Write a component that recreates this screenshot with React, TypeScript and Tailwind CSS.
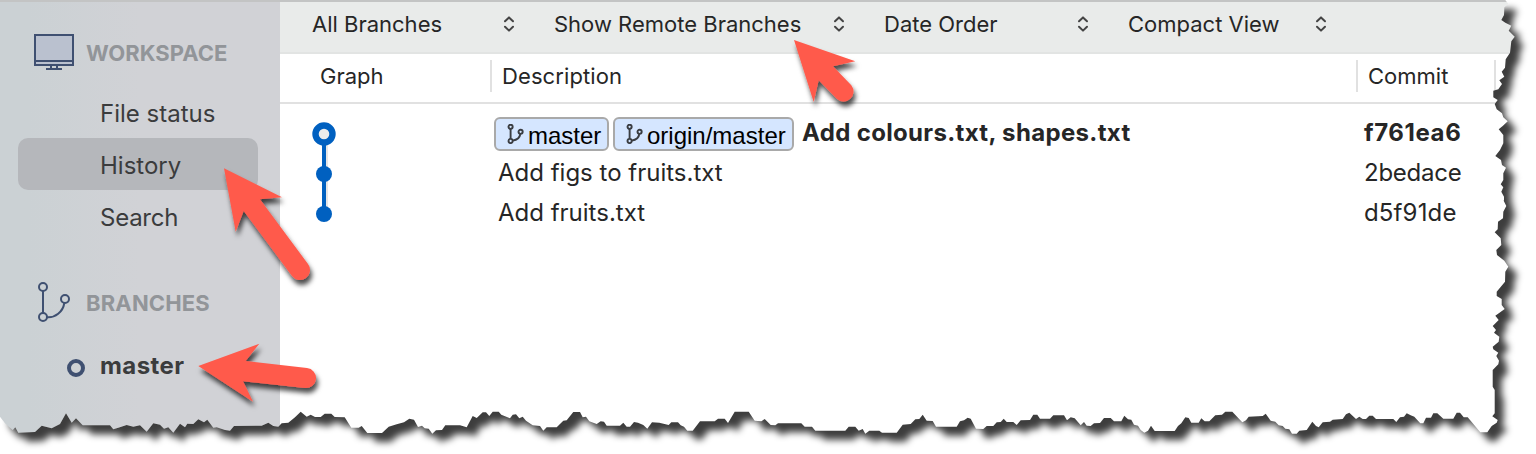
import React from "react";

type Pt = [number, number];

/* Outline of the torn sheet: runs of points in third-of-a-pixel units, each with its own origin. */
const RUNS: { ox: number; oy: number; pts: string }[] = [
  {
    ox: 1466,
    oy: 0,
    pts: "118,0 127,12 115,22 114,45 106,60 118,68 136,77 128,92 146,110 136,124 132,158 119,178 117,203 107,215 115,230 100,241 108,252 97,268 82,272 82,292 95,300 86,312 92,328 108,340 112,352 125,364 110,378 98,388 112,405 112,430 102,450 88,468 105,480 108,495 120,503 112,520 112,540 104,553 112,562 106,575 114,590 114,602",
  },
  {
    ox: 1416,
    oy: 200,
    pts: "262,0 271,18 262,35 261,55 246,65 245,88 236,97 254,115 256,135 241,150 243,165 265,182 277,200 268,215 267,245 242,275 242,288 257,297 257,315 266,327 238,347 248,360 230,378 240,390 234,398 250,410 248,425 230,440 232,448 247,458 241,468 249,482 247,493 230,510 230,560 236,570 236,640 229,649 245,660 242,668 227,678 214,697 193,697 155,652 143,652 132,638 122,638 112,656 82,656 64,640 52,640 45,653 30,653 22,670 13,670",
  },
  {
    ox: 1100,
    oy: 380,
    pts: "943,110 932,106 920,100 912,110 900,112 889,126 880,117 828,117 818,107 808,107 798,117 788,117 778,110 768,117 748,98 738,103 728,117 698,119 690,125 668,127 656,142 648,138 637,125 620,150 598,152 590,161 576,161 568,148 556,146 548,138 536,136 526,125 512,122 497,101 488,108 446,110 438,121 427,127 397,95 376,95 366,104 346,106 328,124 314,124 304,115 296,128 274,128 266,114 256,112 244,130 234,138 224,153 164,153 153,137 144,152 133,158 122,150 114,137 102,134 94,119 84,118 73,107 64,124 42,124 32,114 12,114 0,129",
  },
  {
    ox: 700,
    oy: 380,
    pts: "1182,130 1172,138 1160,137 1152,126 1142,136 1124,115 1112,112 1101,121 1092,106 1060,106 1050,116 1020,116 1012,104 1000,104 990,120 962,121 950,135 940,126 920,126 911,116 902,126 890,127 880,138 860,138 850,147 828,146 812,116 803,113 792,121 780,124 770,140 708,140 698,123 680,122 668,104 658,117 646,118 632,132 608,134 590,158 546,158 538,152 508,152 496,161 488,147 476,152 466,140 446,140 436,152 346,152 336,140 314,140 304,130 234,130 226,136 212,135 194,117 184,124 164,122 146,95 104,95 84,129 74,116 54,116 44,124 0,124",
  },
  {
    ox: 280,
    oy: 380,
    pts: "1238,152 1222,152 1212,140 1202,136 1194,127 1174,127 1166,135 1138,128 1116,127 1102,146 1090,135 1074,128 1062,126 1050,140 1040,140 1030,128 1020,137 980,137 972,125 962,124 950,132 928,124 918,110 908,112 900,96 880,96 860,121 850,122 830,142 800,142 790,152 780,138 758,136 738,122 728,110 718,115 708,103 698,104 690,115 664,104 656,95 638,95 628,108 618,97 608,97 590,114 578,108 560,142 540,136 496,136 486,150 468,151 457,161 446,146 434,145 426,137 414,141 402,119 388,116 372,127 350,133 326,140 306,159 262,159 245,138 236,143 214,143 194,112 164,111 154,101 134,101 122,111",
  },
  {
    ox: 0,
    oy: 230,
    pts: "945,561 932,554 920,560 902,545 885,562 865,578 845,580 835,590 820,588 805,578 785,587 702,588 690,602 675,600 650,592 640,593 622,569 612,577 595,568 580,582 562,581 555,592 540,581 520,608 505,592 492,596 480,584 460,580 440,605 420,586 400,590 380,585 355,593 340,598 330,586 248,586 228,565 215,578 198,550 180,582 155,595 125,587 105,606 55,608 46,592 38,600 15,580 0,560",
  },
];

const SHEET =
  "M0 0L" +
  RUNS.flatMap((r) =>
    r.pts.split(" ").map((p) => {
      const [x, y] = p.split(",").map(Number) as Pt;
      return `${(r.ox + x / 3).toFixed(1)} ${(r.oy + y / 3).toFixed(1)}`;
    }),
  ).join("L") +
  "Z";

function TornEdge() {
  return (
    <svg className="pointer-events-none absolute inset-0" width="1536" height="454" viewBox="0 0 1536 454">
      <defs>
        <clipPath id="outside">
          <path clipRule="evenodd" d={`M-20-20H1560V480H-20Z${SHEET}`} />
        </clipPath>
        <filter id="soft" x="-5%" y="-5%" width="110%" height="115%">
          <feGaussianBlur stdDeviation="3.8" />
        </filter>
      </defs>
      <g clipPath="url(#outside)">
        <rect width="1536" height="454" fill="#fff" />
        <g filter="url(#soft)">
          <path d={SHEET} transform="translate(9 9)" fill="#000" fillOpacity="0.76" />
        </g>
      </g>
    </svg>
  );
}

function Arrows() {
  return (
    <svg className="pointer-events-none absolute inset-0" width="1536" height="454" viewBox="0 0 1536 454">
      <defs>
        <filter id="arrowShadow" x="-30%" y="-30%" width="160%" height="160%">
          <feDropShadow dx="2" dy="5" stdDeviation="2.6" floodColor="#000" floodOpacity="0.7" />
        </filter>
      </defs>
      <g fill="#ff5a4c">
        <path filter="url(#arrowShadow)" d="M224 168.3L282 197.3L260 199.3L308 264A10 10 0 0 1 292 276L243.7 211L235.7 231.7Z" />
        <path filter="url(#arrowShadow)" d="M198.3 366L259.3 343.7L245.7 361L307 368A10 10 0 0 1 305 388L243 381.3L253 401.7Z" />
        <path filter="url(#arrowShadow)" d="M794 40L855.3 61.3L833 66.3L851.3 85.2A10 10 0 0 1 836.7 98.8L818.7 80.3L813.7 102Z" />
      </g>
    </svg>
  );
}

function Monitor() {
  return (
    <svg width="40" height="36" viewBox="0 0 40 36" fill="none" stroke="#3f5071" strokeWidth="2">
      <rect x="1" y="1" width="38" height="30" fill="#bac1cf" />
      <path d="M1 27H39M17 31V35M23 31V35M12 35H28" />
    </svg>
  );
}

function BranchLarge() {
  return (
    <svg width="32" height="40" viewBox="0 0 32 40" fill="none" stroke="#3f5071" strokeWidth="2">
      <circle cx="5" cy="5" r="4" />
      <circle cx="5" cy="35" r="4" />
      <circle cx="27" cy="17" r="4" />
      <path d="M5 9V31M9 35.3C17 36 25 30 26.3 21" />
    </svg>
  );
}

function BranchSmall() {
  return (
    <svg className="mt-px shrink-0" width="17" height="20" viewBox="0 0 17 20" fill="none" stroke="#3a3d42" strokeWidth="1.9">
      <circle cx="3.6" cy="2.8" r="2.1" />
      <circle cx="3.6" cy="17" r="2.1" />
      <circle cx="13.6" cy="7.8" r="2.1" />
      <path d="M3.6 5V14.8M5.8 16.6C9.8 16 12.8 13.5 13.3 10" />
    </svg>
  );
}

function Select({ label, box }: { label: string; box: string }) {
  return (
    <div className={`flex shrink-0 items-center justify-between ${box}`}>
      <span className="whitespace-nowrap pb-px">{label}</span>
      <svg width="12" height="16" viewBox="0 0 12 16" fill="none" stroke="#444" strokeWidth="2" strokeLinecap="round" strokeLinejoin="round">
        <path d="M2 5.2L6 1.4L10 5.2M2 10.8L6 14.6L10 10.8" />
      </svg>
    </div>
  );
}

function Badge({ label, box }: { label: string; box: string }) {
  return (
    <span
      className={`flex h-[34px] shrink-0 items-center rounded-[6px] border-2 border-[#a9a9a9] bg-[#d5e6ff] pl-[11px] font-['Liberation_Sans',sans-serif] text-[24px] font-normal tracking-normal text-black ${box}`}
    >
      <BranchSmall />
      <span className="ml-[4px] mt-[5px] leading-none">{label}</span>
    </span>
  );
}

export default function App() {
  return (
    <div className="relative flex h-[454px] w-[1536px] flex-col overflow-hidden bg-white font-[Inter,sans-serif] text-[22px] leading-none text-[#262626]">
      <div className="h-[2px] shrink-0 bg-[#c3c4c4]" />
      <div className="flex flex-1">
        <aside className="flex w-[280px] shrink-0 flex-col bg-linear-to-r from-[#cbd1d4] from-10% to-[#d1d2d6] to-50% text-[24px] text-[#3b3c3d]">
          <div className="mt-[32px] flex h-[36px] items-center pl-[34px] font-bold text-[#929599]">
            <Monitor />
            <span className="ml-[12px] pt-[2px] text-[22px]">WORKSPACE</span>
          </div>
          <nav className="mt-[16px] flex flex-col pl-[18px] pr-[22px]">
            <span className="flex h-[52px] items-center pl-[82px] pt-[4px]">File status</span>
            <span className="flex h-[52px] items-center rounded-[10px] bg-[#b5b7bb] pl-[82px] pt-[4px]">History</span>
            <span className="flex h-[52px] items-center pl-[82px] pt-[4px] tracking-[-0.25px]">Search</span>
          </nav>
          <div className="mt-[38px] flex h-[44px] items-center pl-[38px] font-bold text-[#929599]">
            <BranchLarge />
            <span className="ml-[16px] pt-[2px] text-[22px] tracking-[0.15px]">BRANCHES</span>
          </div>
          <div className="mt-[22px] flex h-[40px] items-center pl-[67px] font-bold">
            <span className="mt-[3px] size-[18px] rounded-full border-[4px] border-[#3f5071]" />
            <span className="ml-[15px] tracking-[0.4px]">master</span>
          </div>
        </aside>
        <main className="flex flex-1 flex-col">
          <div className="flex h-[52px] shrink-0 gap-[39px] border-b-2 border-[#e2e4e3] bg-[#e9ebea] pb-[6px] pl-[32px]">
            <Select label="All Branches" box="w-[203px]" />
            <Select label="Show Remote Branches" box="w-[291px]" />
            <Select label="Date Order" box="w-[205px]" />
            <Select label="Compact View" box="w-[199px]" />
          </div>
          <div className="flex h-[50px] shrink-0 border-b-2 border-[#e1e1e1] pt-[6px]">
            <div className="flex h-[32px] w-[210px] items-center pb-px pl-[40px]">Graph</div>
            <div className="flex h-[32px] w-[866px] items-center border-l-2 border-[#e1e1e1] pb-px pl-[10px] tracking-[0.1px]">Description</div>
            <div className="flex h-[32px] w-[138px] items-center border-l-2 border-[#e1e1e1] pb-px pl-[10px]">Commit</div>
            <div className="h-[32px] border-l-2 border-[#e1e1e1]" />
          </div>
          <div className="flex text-[24px]">
            <div className="w-[210px] pl-[32px] pt-[18px]">
              <svg width="24" height="102" viewBox="0 0 24 102">
                <path d="M15 20V92" stroke="#e6e6e6" strokeWidth="2" />
                <path d="M12 12V92" stroke="#0060c0" strokeWidth="4" />
                <circle cx="12" cy="12" r="8.5" fill="#ececec" stroke="#0060c0" strokeWidth="6.4" />
                <circle cx="12" cy="52" r="8" fill="#0060c0" />
                <circle cx="12" cy="92" r="8" fill="#0060c0" />
              </svg>
            </div>
            <div className="flex w-[866px] flex-col pt-[8px]">
              <div className="flex h-[42px] items-center pl-[4px] font-bold">
                <Badge label="master" box="mt-px w-[115px]" />
                <Badge label="origin/master" box="mt-px ml-[4px] w-[181px]" />
                <span className="ml-[8px] tracking-[0.34px]">Add colours.txt, shapes.txt</span>
              </div>
              <div className="flex h-[38px] items-center pl-[8px]">Add figs to fruits.txt</div>
              <div className="flex h-[42px] items-center pl-[8px]">Add fruits.txt</div>
            </div>
            <div className="flex flex-col pl-[8px] pt-[8px]">
              <div className="flex h-[42px] items-center font-bold tracking-[0.6px]">f761ea6</div>
              <div className="flex h-[38px] items-center tracking-[-0.25px]">2bedace</div>
              <div className="flex h-[42px] items-center tracking-[0.15px]">d5f91de</div>
            </div>
          </div>
        </main>
      </div>
      <TornEdge />
      <Arrows />
    </div>
  );
}
